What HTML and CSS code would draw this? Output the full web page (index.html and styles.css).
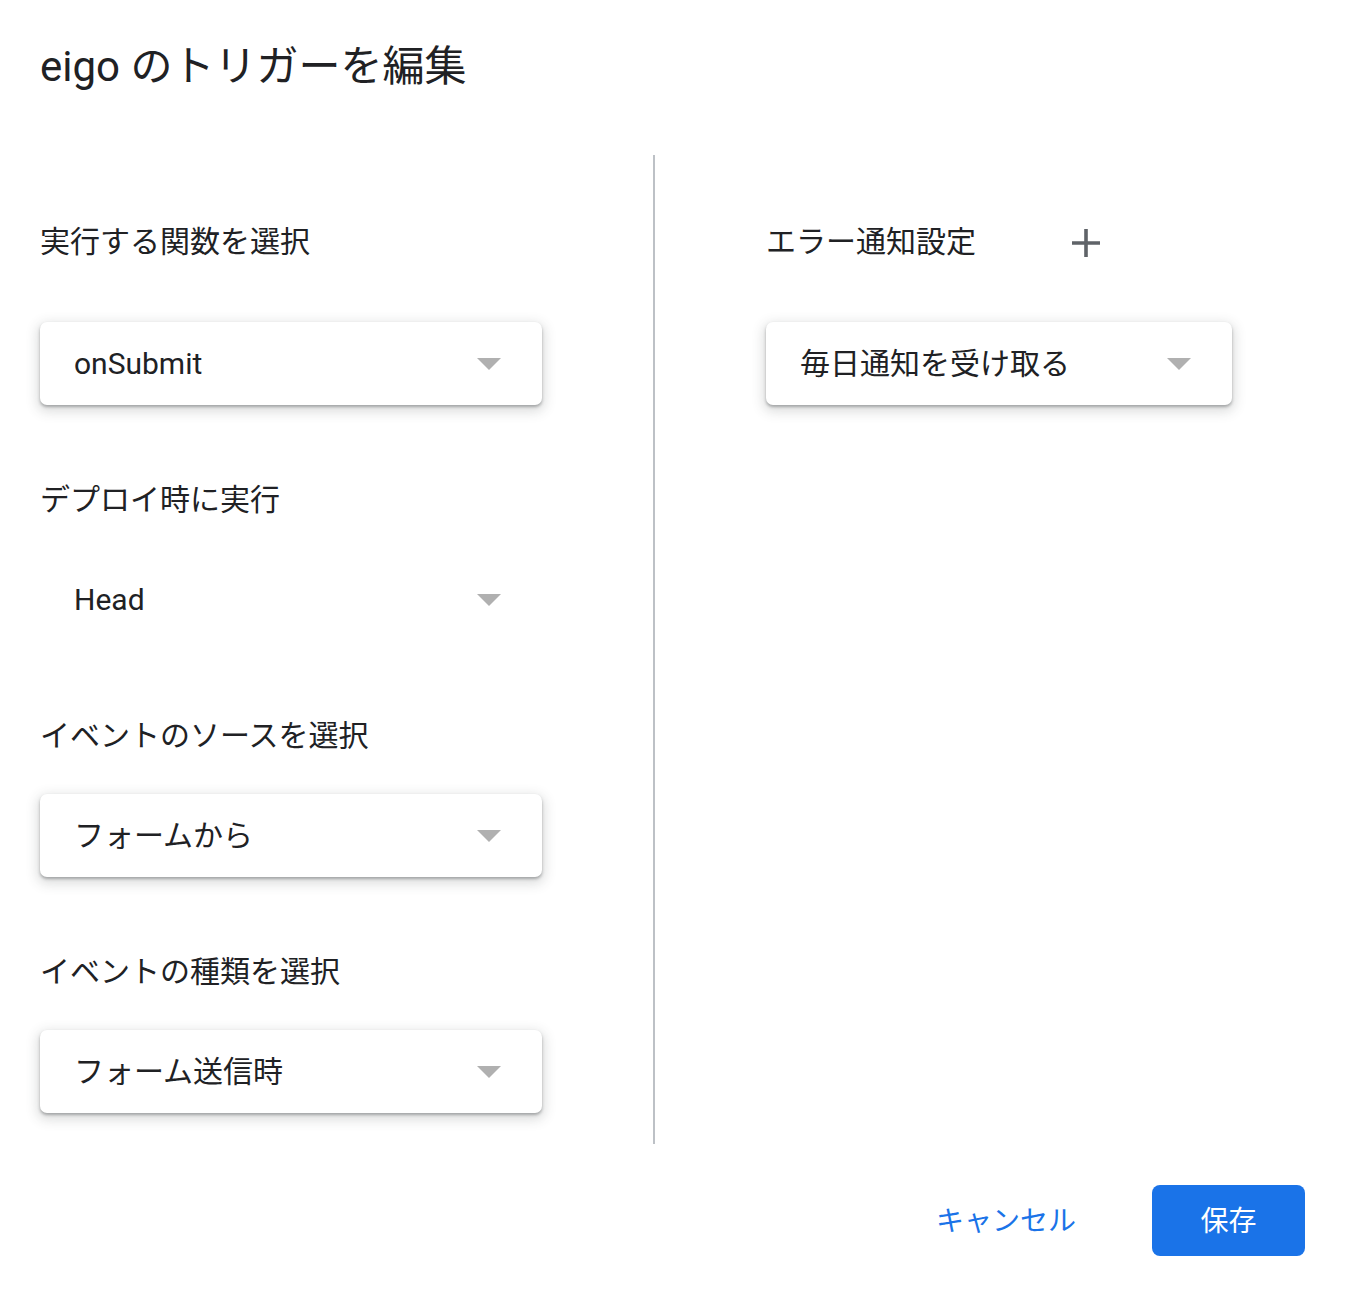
FILE: index.html
```html
<!DOCTYPE html>
<html lang="ja">
<head>
<meta charset="utf-8">
<title>eigo のトリガーを編集</title>
<link rel="stylesheet" href="styles.css">
</head>
<body>
<div class="dialog">
  <h1 class="title">eigo のトリガーを編集</h1>
  <div class="body">
    <div class="col col-left">
      <div class="field field-first">
        <div class="label">実行する関数を選択</div>
        <div class="select"><span class="value">onSubmit</span><span class="arrow"></span></div>
      </div>
      <div class="field">
        <div class="label">デプロイ時に実行</div>
        <div class="select flat"><span class="value">Head</span><span class="arrow"></span></div>
      </div>
      <div class="field">
        <div class="label">イベントのソースを選択</div>
        <div class="select"><span class="value">フォームから</span><span class="arrow"></span></div>
      </div>
      <div class="field">
        <div class="label">イベントの種類を選択</div>
        <div class="select"><span class="value">フォーム送信時</span><span class="arrow"></span></div>
      </div>
    </div>
    <div class="divider"></div>
    <div class="col col-right">
      <div class="field field-first">
        <div class="label label-row">エラー通知設定
          <svg class="plus" width="28" height="28" viewBox="0 0 28 28"><path d="M14 0v28M0 14h28" stroke="#5f6368" stroke-width="3.6" fill="none"/></svg>
        </div>
        <div class="select select-wide"><span class="value">毎日通知を受け取る</span><span class="arrow"></span></div>
      </div>
    </div>
  </div>
  <div class="actions">
    <button class="btn btn-text">キャンセル</button>
    <button class="btn btn-primary">保存</button>
  </div>
</div>
</body>
</html>
```
FILE: styles.css
```css
* { box-sizing: border-box; }
html, body { margin: 0; padding: 0; background: #fff; }
body {
  font-family: Roboto, "Noto Sans CJK JP", sans-serif;
  color: #202124;
}
.dialog {
  width: 1354px;
  padding: 39px 49px 0 40px;
}
.title {
  margin: 0;
  font-size: 42px;
  font-weight: 400;
  line-height: 56px;
  height: 56px;
}
.body {
  display: flex;
  margin-top: 60px;
  height: 989px;
}
.col-left {
  width: 613px;
  padding-top: 67px;
}
.divider {
  width: 2px;
  background: #bdc1c6;
  flex: none;
}
.col-right {
  padding-left: 111px;
  padding-top: 67px;
}
.field { margin-bottom: 75px; }
.label {
  font-size: 30px;
  line-height: 40px;
  height: 40px;
  margin-bottom: 38px;
  white-space: nowrap;
}
.field-first .label { margin-bottom: 60px; }
.label-row {
  display: flex;
  align-items: center;
}
.plus { margin-left: 96px; margin-top: 2px; }
.select {
  width: 502px;
  height: 83px;
  border-radius: 7px;
  background: #fff;
  display: flex;
  align-items: center;
  justify-content: space-between;
  padding: 0 41px 0 34px;
  box-shadow: 0 2px 3px rgba(60, 64, 67, 0.38), 0 4px 12px 3px rgba(60, 64, 67, 0.17);
}
.select.flat { box-shadow: none; }
.select-wide { width: 466px; }
.value {
  font-size: 30px;
  line-height: 40px;
  color: #202124;
}
.arrow {
  width: 0;
  height: 0;
  border-left: 12px solid transparent;
  border-right: 12px solid transparent;
  border-top: 12px solid #b0b0b0;
}
.actions {
  display: flex;
  justify-content: flex-end;
  align-items: center;
  margin-top: 41px;
}
.btn {
  font-family: Roboto, "Noto Sans CJK JP", sans-serif;
  font-size: 28px;
  border: none;
  height: 71px;
  border-radius: 8px;
  cursor: pointer;
  padding-bottom: 4px;
}
.btn-text {
  background: transparent;
  color: #1a73e8;
  padding-left: 0;
  padding-right: 0;
  margin-right: 76px;
}
.btn-primary {
  background: #1a73e8;
  color: #fff;
  width: 153px;
}
```
